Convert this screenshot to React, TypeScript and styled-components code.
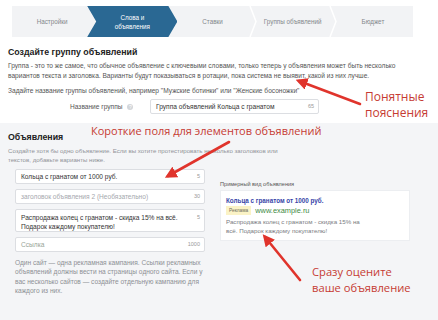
import styled, { createGlobalStyle } from 'styled-components';

const GlobalStyle = createGlobalStyle`
	html,
	body {
		margin: 0;
		padding: 0;
		background: #fff;
	}

	body {
		font-family: 'Liberation Sans', Arial, sans-serif;
		color: #333;
	}
`;

const steps = ['Настройки', 'Слова и объявления', 'Ставки', 'Группы объявлений', 'Бюджет'];
const activeStep = 1;

const App: React.FunctionComponent = () => {
	return (
		<>
			<GlobalStyle />
			<Page>
				<Steps>
					{steps.map(
						(step: string, i: number): JSX.Element => (
							<Step key={step} $active={i === activeStep}>
								{i === activeStep ? (
									<>
										Слова и
										<br />
										объявления
									</>
								) : (
									step
								)}
								{i > activeStep && i < steps.length - 1 && (
									<Separator viewBox="0 0 8 31" preserveAspectRatio="none">
										<polyline points="1,0 7,15.5 1,31" />
									</Separator>
								)}
							</Step>
						),
					)}
				</Steps>

				<Intro>
					<Title>Создайте группу объявлений</Title>
					<Text>
						Группа - это то же самое, что обычное объявление с ключевыми словами, только теперь у объявления может быть несколько
						<br />
						вариантов текста и заголовка. Варианты будут показываться в ротации, пока система не выявит, какой из них лучше.
					</Text>
					<Text $top={5}>Задайте название группы объявлений, например "Мужские ботинки" или "Женские босоножки"</Text>
					<NameRow>
						<NameLabel>
							Название группы <Hint>?</Hint>
						</NameLabel>
						<Field $width={169}>
							<FieldText>Группа объявлений Кольца с гранатом</FieldText>
							<Counter>65</Counter>
						</Field>
					</NameRow>
				</Intro>

				<Ads>
					<Title>Объявления</Title>
					<Text $muted>
						Создайте хотя бы одно объявление. Если вы хотите протестировать несколько заголовков или
						<br />
						текстов, добавьте варианты ниже.
					</Text>
					<AdsGrid>
						<Fields>
							<Field>
								<FieldText>Кольца с гранатом от 1000 руб.</FieldText>
								<Counter>5</Counter>
							</Field>
							<Field>
								<FieldText $placeholder>заголовок объявления 2 (Необязательно)</FieldText>
								<Counter>30</Counter>
							</Field>
							<Field $multiline>
								<FieldText>
									Распродажа колец с гранатом - скидка 15% на всё.
									<br />
									Подарок каждому покупателю!
								</FieldText>
								<Counter>5</Counter>
							</Field>
							<Field>
								<FieldText $link>Ссылка</FieldText>
								<Counter>1000</Counter>
							</Field>
							<Help>
								Один сайт — одна рекламная кампания. Ссылки рекламных
								<br />
								объявлений должны вести на страницы одного сайта. Если у
								<br />
								вас несколько сайтов — создайте отдельную кампанию для
								<br />
								каждого из них.
							</Help>
						</Fields>

						<Preview>
							<PreviewLabel>Примерный вид объявления</PreviewLabel>
							<AdCard>
								<AdTitle>Кольца с гранатом от 1000 руб.</AdTitle>
								<AdMeta>
									<Badge>Реклама</Badge>
									<AdUrl>www.example.ru</AdUrl>
								</AdMeta>
								<AdText>
									Распродажа колец с гранатом - скидка 15% на
									<br />
									всё. Подарок каждому покупателю!
								</AdText>
							</AdCard>
						</Preview>
					</AdsGrid>
				</Ads>

				<Notes>
					<Arrows viewBox="0 0 438 320">
						<defs>
							<marker id="head" viewBox="0 0 10 10" refX="7" refY="5" markerWidth="4.6" markerHeight="4.6" orient="auto">
								<path d="M0,0 L10,5 L0,10 z" fill="#e0342c" />
							</marker>
						</defs>
						<line x1="360" y1="104" x2="299" y2="81" markerEnd="url(#head)" />
						<line x1="229" y1="142" x2="168" y2="176" markerEnd="url(#head)" />
						<line x1="300" y1="280" x2="265" y2="237" markerEnd="url(#head)" />
					</Arrows>
					<Note $x={365} $y={89} $size={12}>
						Понятные
						<br />
						пояснения
					</Note>
					<Note $x={91} $y={123} $size={11}>
						Короткие поля для элементов объявлений
					</Note>
					<Note $x={312} $y={264} $size={11.2}>
						Сразу оцените
						<br />
						ваше объявление
					</Note>
				</Notes>
			</Page>
		</>
	);
};

const Page = styled.div`
	position: relative;
	width: 438px;
	height: 320px;
	overflow: hidden;
	background: #fff;
`;

const Steps = styled.nav`
	display: flex;
	height: 31px;
	margin: 6px 25px 0 12px;
	background: #f2f3f5;
`;

const Step = styled.div<{ $active?: boolean }>`
	position: relative;
	flex: 1;
	display: flex;
	align-items: center;
	justify-content: center;
	text-align: center;
	font-size: 6.3px;
	line-height: 9px;
	color: ${(p): string => (p.$active ? '#fff' : '#84888c')};
	background: ${(p): string => (p.$active ? '#2a6893' : 'transparent')};
	margin: ${(p): string => (p.$active ? '0 -5px 0 -5px' : '0')};
	padding: ${(p): string => (p.$active ? '0 5px' : '0')};
	clip-path: ${(p): string =>
		p.$active ? 'polygon(0 0, 90% 0, 100% 50%, 90% 100%, 0 100%, 10% 50%)' : 'none'};
	z-index: ${(p): number => (p.$active ? 1 : 0)};
`;

const Separator = styled.svg`
	position: absolute;
	right: -4px;
	top: 0;
	width: 8px;
	height: 31px;

	polyline {
		fill: none;
		stroke: #fff;
		stroke-width: 1.5;
	}
`;

const Intro = styled.section`
	padding: 9px 8px 9px;
`;

const Title = styled.h2`
	margin: 0 0 3px;
	font-size: 8.8px;
	font-weight: 700;
	line-height: 12px;
	color: #222;
`;

const Text = styled.p<{ $top?: number; $muted?: boolean }>`
	margin: ${(p): number => p.$top || 0}px 0 0;
	font-size: ${(p): number => (p.$muted ? 6.1 : 6.6)}px;
	line-height: ${(p): number => (p.$muted ? 9 : 10)}px;
	color: ${(p): string => (p.$muted ? '#909398' : '#555')};
	white-space: nowrap;
`;

const NameRow = styled.div`
	display: flex;
	align-items: center;
	gap: 10px;
	margin-top: 3px;
	padding-left: 62px;
`;

const NameLabel = styled.span`
	width: 70px;
	font-size: 6.6px;
	color: #555;
	white-space: nowrap;
`;

const Hint = styled.span`
	display: inline-flex;
	align-items: center;
	justify-content: center;
	width: 6px;
	height: 6px;
	margin-left: 3px;
	border-radius: 50%;
	background: #d3d6da;
	color: #fff;
	font-size: 5px;
	vertical-align: middle;
`;

const Field = styled.div<{ $width?: number; $multiline?: boolean }>`
	display: flex;
	align-items: ${(p): string => (p.$multiline ? 'flex-start' : 'center')};
	justify-content: space-between;
	width: ${(p): string => (p.$width ? `${p.$width}px` : 'auto')};
	height: ${(p): number => (p.$multiline ? 23 : 15)}px;
	padding: ${(p): string => (p.$multiline ? '3px 4px 0 5px' : '0 4px 0 5px')};
	box-sizing: border-box;
	background: #fff;
	border: 1px solid #dcdee2;
	border-radius: 2px;
`;

const FieldText = styled.span<{ $placeholder?: boolean; $link?: boolean }>`
	font-size: 6.6px;
	line-height: 9px;
	white-space: nowrap;
	color: ${(p): string => (p.$link ? '#97a597' : p.$placeholder ? '#a5a8ad' : '#333')};
`;

const Counter = styled.span`
	font-size: 5.5px;
	line-height: 9px;
	color: #999;
`;

const Ads = styled.section`
	height: 200px;
	padding: 8px 8px 0;
	background: #f4f5f7;
`;

const AdsGrid = styled.div`
	display: grid;
	grid-template-columns: 190px 190px;
	gap: 15px;
	margin-top: 5px;
	padding-left: 7px;
`;

const Fields = styled.div`
	display: flex;
	flex-direction: column;
	gap: 5px;
`;

const Help = styled.p`
	margin: 1px 0 0;
	font-size: 6.6px;
	line-height: 9.4px;
	color: #8d9095;
	white-space: nowrap;
`;

const Preview = styled.div`
	padding-top: 12px;
`;

const PreviewLabel = styled.div`
	font-size: 5.6px;
	color: #555;
	margin-bottom: 3px;
`;

const AdCard = styled.div`
	padding: 5px;
	background: #fff;
	border: 1px solid #eceef1;
`;

const AdTitle = styled.div`
	font-size: 6.3px;
	font-weight: 700;
	color: #3544a8;
	line-height: 9px;
`;

const AdMeta = styled.div`
	display: flex;
	align-items: center;
	gap: 4px;
	margin: 1px 0 2px;
`;

const Badge = styled.span`
	padding: 1px 3px;
	background: #fbf3c6;
	color: #6b6b5b;
	font-size: 4.8px;
	line-height: 7px;
`;

const AdUrl = styled.span`
	font-size: 7.4px;
	color: #3d8a3f;
`;

const AdText = styled.div`
	font-size: 6.2px;
	line-height: 9px;
	color: #7a7d82;
`;

const Notes = styled.div`
	position: absolute;
	inset: 0;
	pointer-events: none;
	z-index: 2;
`;

const Arrows = styled.svg`
	position: absolute;
	inset: 0;
	width: 438px;
	height: 320px;

	line {
		stroke: #e0342c;
		stroke-width: 2.6;
		stroke-linecap: round;
	}
`;

const Note = styled.div<{ $x: number; $y: number; $size: number }>`
	position: absolute;
	left: ${(p): number => p.$x}px;
	top: ${(p): number => p.$y}px;
	font-family: 'Open Sans', 'Liberation Sans', sans-serif;
	font-size: ${(p): number => p.$size}px;
	line-height: 16px;
	color: #c63b33;
	white-space: nowrap;
`;

export default App;
